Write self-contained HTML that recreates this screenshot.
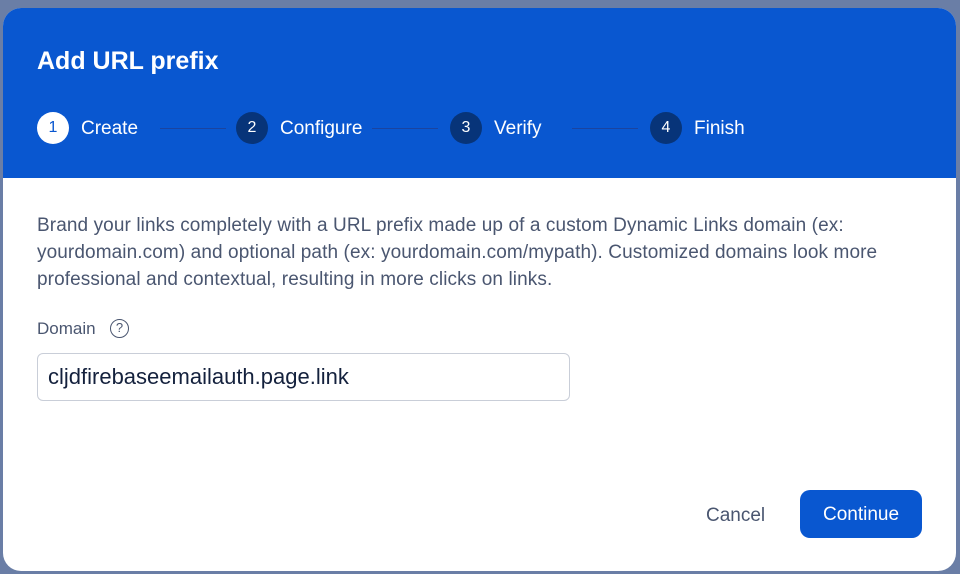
<!DOCTYPE html>
<html><head><style>
*{margin:0;padding:0;box-sizing:border-box}
body{width:960px;height:574px;overflow:hidden;background:#6a7ea6;font-family:"Liberation Sans",sans-serif;position:relative}
.dlg{position:absolute;left:3px;top:8px;width:953px;height:563px;background:#fff;border-radius:18px;overflow:hidden}
.hd{position:absolute;left:0;top:0;width:100%;height:170px;background:#0957d0}
.t{position:absolute;left:34px;top:39px;color:#fff;font-size:25px;font-weight:bold}
.c{position:absolute;width:32px;height:32px;border-radius:50%;top:104px;text-align:center;line-height:32px;font-size:16px;color:#fff;background:#073479}
.c.a{background:#fff;color:#0957d0}
.l{position:absolute;top:110px;color:#fff;font-size:19px}
.ln{position:absolute;top:120px;height:1px;background:#1a44a0}
.p{position:absolute;left:34px;top:204px;width:900px;font-size:19px;letter-spacing:0.1px;line-height:27px;color:#4a5670}
.lab{position:absolute;left:34px;top:311px;font-size:17px;color:#4a5670}
.q{position:absolute;left:107px;top:311px;width:19px;height:19px;border:1.5px solid #4a5670;border-radius:50%;font-size:13px;text-align:center;line-height:16px;color:#4a5670}
.in{position:absolute;left:34px;top:345px;width:533px;height:48px;border:1px solid #c9ced8;border-radius:6px;font-size:22px;color:#14213d;padding-left:10px;line-height:46px}
.cn{position:absolute;left:703px;top:497px;font-size:19px;color:#4a5670}
.bt{position:absolute;left:797px;top:482px;width:122px;height:48px;background:#0957d0;border-radius:10px;color:#fff;font-size:19px;text-align:center;line-height:50px}
</style></head><body>
<div class="dlg">
<div class="hd">
<div class="t">Add URL prefix</div>
<div class="c a" style="left:34px">1</div><div class="l" style="left:78px">Create</div>
<div class="ln" style="left:157px;width:66px"></div>
<div class="c" style="left:233px">2</div><div class="l" style="left:277px">Configure</div>
<div class="ln" style="left:369px;width:66px"></div>
<div class="c" style="left:447px">3</div><div class="l" style="left:491px">Verify</div>
<div class="ln" style="left:569px;width:66px"></div>
<div class="c" style="left:647px">4</div><div class="l" style="left:691px">Finish</div>
</div>
<div class="p">Brand your links completely with a URL prefix made up of a custom Dynamic Links domain (ex: yourdomain.com) and optional path (ex: yourdomain.com/mypath). Customized domains look more professional and contextual, resulting in more clicks on links.</div>
<div class="lab">Domain</div><div class="q">?</div>
<div class="in">cljdfirebaseemailauth.page.link</div>
<div class="cn">Cancel</div>
<div class="bt">Continue</div>
</div>
</body></html>
